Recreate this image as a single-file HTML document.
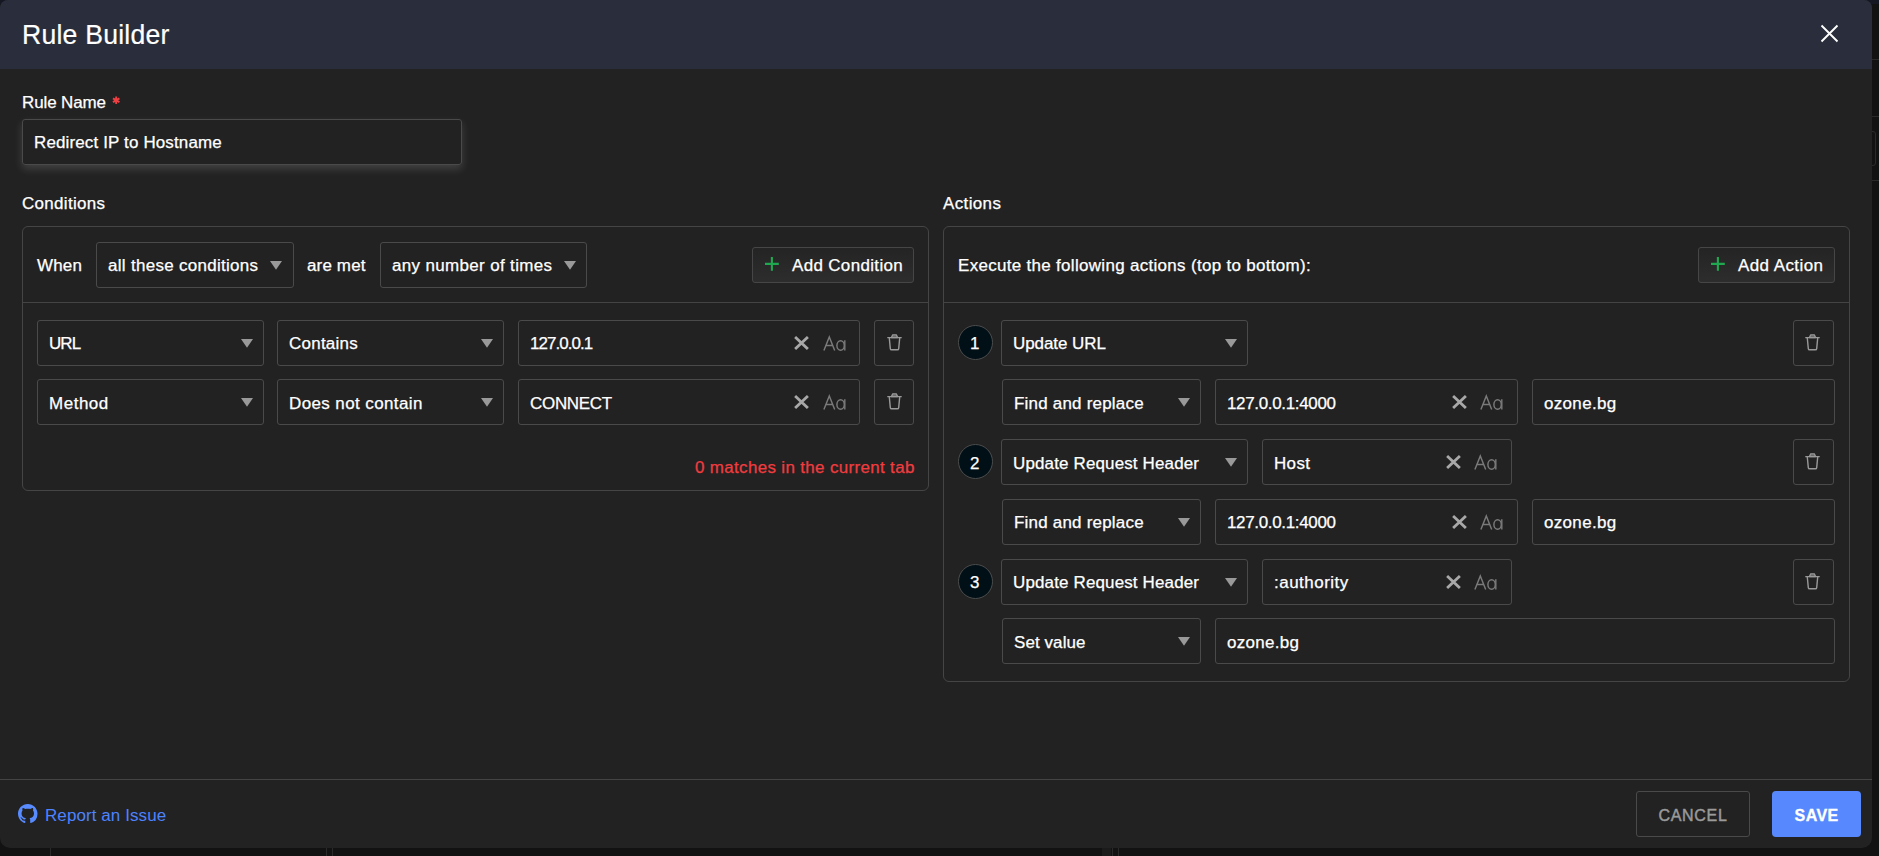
<!DOCTYPE html>
<html lang="en"><head><meta charset="utf-8"><title>Rule Builder</title><style>
html,body{margin:0;padding:0}
body{width:1879px;height:856px;overflow:hidden;background:#121212;position:relative;font-family:"Liberation Sans",sans-serif}
.ab,.bx,.pn,.btn,.hl,.ci,.t{position:absolute;box-sizing:border-box}
.modal{position:absolute;left:0;top:0;width:1872px;height:848px;background:#222222;border-radius:8px 8px 10px 10px;overflow:hidden}
.hdr{position:absolute;left:0;top:0;width:1872px;height:69px;background:#2a2e3c}
.bx{border:1px solid #4a4a4a}
.pn{border:1px solid #454545}
.btn{border:1px solid #464646;background:linear-gradient(#242424,#2d2d2d)}
.hl{height:1px;background:#444}
.ci{width:35px;height:35px;border-radius:50%;background:#010f16;border:1px solid #4c4c4c}
.t{white-space:pre;transform-origin:0 0}
.bk{position:absolute;background:#2a2a2a}
.g{position:absolute;left:0;top:0;width:0;height:0;margin:0;padding:0}
</style></head>
<body>

<div class="ab" style="left:0;top:0;width:1879px;height:4px;background:#151823"></div>
<div class="bk" style="left:1872px;top:59px;width:7px;height:1px"></div>
<div class="bk" style="left:1872px;top:116px;width:7px;height:1px"></div>
<div class="bk" style="left:1872px;top:180px;width:7px;height:1px"></div>
<div class="ab" style="left:1860px;top:131px;width:16px;height:35px;border:1px solid #2a2a2a;border-radius:3px"></div>
<div class="bk" style="left:50px;top:848px;width:1px;height:8px"></div>
<div class="bk" style="left:326px;top:848px;width:1px;height:8px"></div>
<div class="bk" style="left:332px;top:848px;width:1px;height:8px"></div>
<div class="ab" style="left:1102px;top:848px;width:9px;height:8px;background:#1b1b1b"></div>
<div class="bk" style="left:1112px;top:848px;width:1px;height:8px"></div>
<div class="bk" style="left:1118px;top:848px;width:1px;height:8px"></div>

<div class="modal" role="dialog" aria-label="Rule Builder">
<header class="g" aria-label="Rule Builder dialog title">
<div class="hdr"></div>
<svg class="ab" style="left:1820px;top:24px" width="19" height="19" viewBox="0 0 19 19"><path d="M1.5 1.5L17.5 17.5M17.5 1.5L1.5 17.5" stroke="#fff" stroke-width="1.9" fill="none"/></svg>
<span class="t" style="left:22.42px;top:17px;font-size:28px;line-height:35px;letter-spacing:0.231px;color:#fff;font-weight:400;transform:scaleX(0.95);-webkit-text-stroke:0.2px #fff">Rule Builder</span>
</header>
<section class="g" aria-label="Rule name">
<svg class="ab" style="left:112.1px;top:95.5px" width="8.4" height="8.4" viewBox="-4.2 -4.2 8.4 8.4"><path d="M0 -3.75V3.75M-3.25 -1.88L3.25 1.88M-3.25 1.88L3.25 -1.88" stroke="#ee3f42" stroke-width="1.9" fill="none"/></svg>
<div class="bx" style="left:22px;top:119px;width:440px;height:46px;border-radius:3px;box-shadow:0 4px 8px rgba(255,255,255,0.15);"></div>
<span class="t" style="left:21.73px;top:93px;font-size:16px;line-height:20px;letter-spacing:-0.097px;color:#fff;font-weight:400;transform:scaleX(1.06);-webkit-text-stroke:0.25px #fff">Rule Name</span>
<span class="t" style="left:33.97px;top:133px;font-size:16px;line-height:20px;letter-spacing:0.14px;color:#fff;font-weight:400;transform:scaleX(1.06);-webkit-text-stroke:0.25px #fff">Redirect IP to Hostname</span>
</section>
<section class="g" aria-label="Conditions">
<div class="pn" style="left:22px;top:226px;width:907px;height:265px;border-radius:6px;"></div>
<div class="hl" style="left:23px;top:302px;width:905px"></div>
<div class="bx" style="left:96px;top:242px;width:198px;height:46px;border-radius:3px;"></div>
<svg class="ab" style="left:270.25px;top:261.25px" width="12" height="8.7" viewBox="0 0 12 8.7"><path d="M0 0H12L6.0 8.7Z" fill="#999"/></svg>
<div class="bx" style="left:380px;top:242px;width:207px;height:46px;border-radius:3px;"></div>
<svg class="ab" style="left:564.25px;top:261.25px" width="12" height="8.7" viewBox="0 0 12 8.7"><path d="M0 0H12L6.0 8.7Z" fill="#999"/></svg>
<div class="btn" style="left:752px;top:247px;width:162px;height:36px;border-radius:3px;"></div>
<svg class="ab" style="left:765.2px;top:257.4px" width="13.8" height="13.8" viewBox="0 0 13.8 13.8"><path d="M6.9 0V13.8M0 6.9H13.8" stroke="#20a850" stroke-width="2.1" fill="none"/></svg>
<div class="bx" style="left:37px;top:320px;width:227px;height:46px;border-radius:3px;"></div>
<svg class="ab" style="left:240.75px;top:339.25px" width="12" height="8.7" viewBox="0 0 12 8.7"><path d="M0 0H12L6.0 8.7Z" fill="#999"/></svg>
<div class="bx" style="left:277px;top:320px;width:227px;height:46px;border-radius:3px;"></div>
<svg class="ab" style="left:481px;top:339.25px" width="12" height="8.7" viewBox="0 0 12 8.7"><path d="M0 0H12L6.0 8.7Z" fill="#999"/></svg>
<div class="bx" style="left:518px;top:320px;width:342px;height:46px;border-radius:3px;"></div>
<svg class="ab" style="left:794.1px;top:336.1px" width="15" height="14" viewBox="0 0 15 14"><path d="M1.1 1L13.9 13M13.9 1L1.1 13" stroke="#a8a8a8" stroke-width="2.8" fill="none"/></svg>
<svg class="ab" style="left:822.5px;top:334.4px" width="24" height="18" viewBox="0 0 24 18"><path d="M0.9 16.4L6.3 2.9L11.7 16.4M2.9 11.4H9.7" stroke="#7a7a7a" stroke-width="1.45" fill="none" stroke-linejoin="miter"/><ellipse cx="17.6" cy="11.5" rx="3.7" ry="4.7" stroke="#7a7a7a" stroke-width="1.45" fill="none"/><path d="M21.8 6.2V16.6" stroke="#7a7a7a" stroke-width="1.45"/></svg>
<div class="bx" style="left:874px;top:320px;width:40px;height:46px;border-radius:3px;"></div>
<svg class="ab" style="left:886.6px;top:333.7px" width="15" height="17" viewBox="0 0 15 17"><path d="M4.4 3.5L5.7 0.8H9.3L10.6 3.5Z" fill="#5c5c5c" stroke="#999" stroke-width="1.3" stroke-linejoin="round"/><path d="M0.3 3.6H14.7M2.3 4L3.3 14.6Q3.4 15.8 4.6 15.8H10.4Q11.6 15.8 11.7 14.6L12.7 4" stroke="#999" stroke-width="1.4" fill="none" stroke-linejoin="round"/></svg>
<div class="bx" style="left:37px;top:379px;width:227px;height:46px;border-radius:3px;"></div>
<svg class="ab" style="left:240.75px;top:398.25px" width="12" height="8.7" viewBox="0 0 12 8.7"><path d="M0 0H12L6.0 8.7Z" fill="#999"/></svg>
<div class="bx" style="left:277px;top:379px;width:227px;height:46px;border-radius:3px;"></div>
<svg class="ab" style="left:481px;top:398.25px" width="12" height="8.7" viewBox="0 0 12 8.7"><path d="M0 0H12L6.0 8.7Z" fill="#999"/></svg>
<div class="bx" style="left:518px;top:379px;width:342px;height:46px;border-radius:3px;"></div>
<svg class="ab" style="left:794.1px;top:395.1px" width="15" height="14" viewBox="0 0 15 14"><path d="M1.1 1L13.9 13M13.9 1L1.1 13" stroke="#a8a8a8" stroke-width="2.8" fill="none"/></svg>
<svg class="ab" style="left:822.5px;top:393.4px" width="24" height="18" viewBox="0 0 24 18"><path d="M0.9 16.4L6.3 2.9L11.7 16.4M2.9 11.4H9.7" stroke="#7a7a7a" stroke-width="1.45" fill="none" stroke-linejoin="miter"/><ellipse cx="17.6" cy="11.5" rx="3.7" ry="4.7" stroke="#7a7a7a" stroke-width="1.45" fill="none"/><path d="M21.8 6.2V16.6" stroke="#7a7a7a" stroke-width="1.45"/></svg>
<div class="bx" style="left:874px;top:379px;width:40px;height:46px;border-radius:3px;"></div>
<svg class="ab" style="left:886.6px;top:392.7px" width="15" height="17" viewBox="0 0 15 17"><path d="M4.4 3.5L5.7 0.8H9.3L10.6 3.5Z" fill="#5c5c5c" stroke="#999" stroke-width="1.3" stroke-linejoin="round"/><path d="M0.3 3.6H14.7M2.3 4L3.3 14.6Q3.4 15.8 4.6 15.8H10.4Q11.6 15.8 11.7 14.6L12.7 4" stroke="#999" stroke-width="1.4" fill="none" stroke-linejoin="round"/></svg>
<span class="t" style="left:21.95px;top:194px;font-size:16px;line-height:20px;letter-spacing:0.308px;color:#fff;font-weight:400;transform:scaleX(1.06);-webkit-text-stroke:0.25px #fff">Conditions</span>
<span class="t" style="left:37.2px;top:256px;font-size:16px;line-height:20px;letter-spacing:0.204px;color:#fff;font-weight:400;transform:scaleX(1.06);-webkit-text-stroke:0.25px #fff">When</span>
<span class="t" style="left:108.47px;top:256px;font-size:16px;line-height:20px;letter-spacing:0.288px;color:#fff;font-weight:400;transform:scaleX(1.06);-webkit-text-stroke:0.25px #fff">all these conditions</span>
<span class="t" style="left:307.47px;top:256px;font-size:16px;line-height:20px;letter-spacing:0.153px;color:#fff;font-weight:400;transform:scaleX(1.06);-webkit-text-stroke:0.25px #fff">are met</span>
<span class="t" style="left:392.47px;top:256px;font-size:16px;line-height:20px;letter-spacing:0.336px;color:#fff;font-weight:400;transform:scaleX(1.06);-webkit-text-stroke:0.25px #fff">any number of times</span>
<span class="t" style="left:791.5px;top:256px;font-size:16px;line-height:20px;letter-spacing:0.327px;color:#fff;font-weight:400;transform:scaleX(1.06);-webkit-text-stroke:0.25px #fff">Add Condition</span>
<span class="t" style="left:49.34px;top:334px;font-size:16px;line-height:20px;letter-spacing:-0.871px;color:#fff;font-weight:400;transform:scaleX(1.06);-webkit-text-stroke:0.25px #fff">URL</span>
<span class="t" style="left:289.31px;top:334px;font-size:16px;line-height:20px;letter-spacing:0.241px;color:#fff;font-weight:400;transform:scaleX(1.06);-webkit-text-stroke:0.25px #fff">Contains</span>
<span class="t" style="left:530.14px;top:334px;font-size:16px;line-height:20px;letter-spacing:-0.894px;color:#fff;font-weight:400;transform:scaleX(1.06);-webkit-text-stroke:0.25px #fff">127.0.0.1</span>
<span class="t" style="left:49.07px;top:394px;font-size:16px;line-height:20px;letter-spacing:0.511px;color:#fff;font-weight:400;transform:scaleX(1.06);-webkit-text-stroke:0.25px #fff">Method</span>
<span class="t" style="left:288.78px;top:394px;font-size:16px;line-height:20px;letter-spacing:0.386px;color:#fff;font-weight:400;transform:scaleX(1.06);-webkit-text-stroke:0.25px #fff">Does not contain</span>
<span class="t" style="left:530.41px;top:394px;font-size:16px;line-height:20px;letter-spacing:-0.263px;color:#fff;font-weight:400;transform:scaleX(1.06);-webkit-text-stroke:0.25px #fff">CONNECT</span>
<span class="t" style="left:695.47px;top:458px;font-size:16px;line-height:20px;letter-spacing:0.318px;color:#f13c40;font-weight:400;transform:scaleX(1.06);-webkit-text-stroke:0.25px #f13c40">0 matches in the current tab</span>
</section>
<section class="g" aria-label="Actions">
<div class="pn" style="left:943px;top:226px;width:907px;height:456px;border-radius:6px;"></div>
<div class="hl" style="left:944px;top:302px;width:905px"></div>
<div class="btn" style="left:1698px;top:247px;width:137px;height:36px;border-radius:3px;"></div>
<svg class="ab" style="left:1711.45px;top:257.4px" width="13.8" height="13.8" viewBox="0 0 13.8 13.8"><path d="M6.9 0V13.8M0 6.9H13.8" stroke="#20a850" stroke-width="2.1" fill="none"/></svg>
<div class="ci" style="left:958px;top:325px"></div>
<div class="bx" style="left:1001px;top:320px;width:247px;height:46px;border-radius:3px;"></div>
<svg class="ab" style="left:1225px;top:339.25px" width="12" height="8.7" viewBox="0 0 12 8.7"><path d="M0 0H12L6.0 8.7Z" fill="#999"/></svg>
<div class="bx" style="left:1793px;top:320px;width:41px;height:46px;border-radius:3px;"></div>
<svg class="ab" style="left:1805.3px;top:333.7px" width="15" height="17" viewBox="0 0 15 17"><path d="M4.4 3.5L5.7 0.8H9.3L10.6 3.5Z" fill="#5c5c5c" stroke="#999" stroke-width="1.3" stroke-linejoin="round"/><path d="M0.3 3.6H14.7M2.3 4L3.3 14.6Q3.4 15.8 4.6 15.8H10.4Q11.6 15.8 11.7 14.6L12.7 4" stroke="#999" stroke-width="1.4" fill="none" stroke-linejoin="round"/></svg>
<div class="bx" style="left:1002px;top:379px;width:199px;height:46px;border-radius:3px;"></div>
<svg class="ab" style="left:1178px;top:398.25px" width="12" height="8.7" viewBox="0 0 12 8.7"><path d="M0 0H12L6.0 8.7Z" fill="#999"/></svg>
<div class="bx" style="left:1215px;top:379px;width:303px;height:46px;border-radius:3px;"></div>
<svg class="ab" style="left:1452.1px;top:395.1px" width="15" height="14" viewBox="0 0 15 14"><path d="M1.1 1L13.9 13M13.9 1L1.1 13" stroke="#a8a8a8" stroke-width="2.8" fill="none"/></svg>
<svg class="ab" style="left:1480.0px;top:393.4px" width="24" height="18" viewBox="0 0 24 18"><path d="M0.9 16.4L6.3 2.9L11.7 16.4M2.9 11.4H9.7" stroke="#7a7a7a" stroke-width="1.45" fill="none" stroke-linejoin="miter"/><ellipse cx="17.6" cy="11.5" rx="3.7" ry="4.7" stroke="#7a7a7a" stroke-width="1.45" fill="none"/><path d="M21.8 6.2V16.6" stroke="#7a7a7a" stroke-width="1.45"/></svg>
<div class="bx" style="left:1532px;top:379px;width:303px;height:46px;border-radius:3px;"></div>
<div class="ci" style="left:958px;top:444px"></div>
<div class="bx" style="left:1001px;top:439px;width:247px;height:46px;border-radius:3px;"></div>
<svg class="ab" style="left:1225px;top:458.25px" width="12" height="8.7" viewBox="0 0 12 8.7"><path d="M0 0H12L6.0 8.7Z" fill="#999"/></svg>
<div class="bx" style="left:1262px;top:439px;width:250px;height:46px;border-radius:3px;"></div>
<svg class="ab" style="left:1446.1px;top:455.1px" width="15" height="14" viewBox="0 0 15 14"><path d="M1.1 1L13.9 13M13.9 1L1.1 13" stroke="#a8a8a8" stroke-width="2.8" fill="none"/></svg>
<svg class="ab" style="left:1474.0px;top:453.4px" width="24" height="18" viewBox="0 0 24 18"><path d="M0.9 16.4L6.3 2.9L11.7 16.4M2.9 11.4H9.7" stroke="#7a7a7a" stroke-width="1.45" fill="none" stroke-linejoin="miter"/><ellipse cx="17.6" cy="11.5" rx="3.7" ry="4.7" stroke="#7a7a7a" stroke-width="1.45" fill="none"/><path d="M21.8 6.2V16.6" stroke="#7a7a7a" stroke-width="1.45"/></svg>
<div class="bx" style="left:1793px;top:439px;width:41px;height:46px;border-radius:3px;"></div>
<svg class="ab" style="left:1805.3px;top:452.7px" width="15" height="17" viewBox="0 0 15 17"><path d="M4.4 3.5L5.7 0.8H9.3L10.6 3.5Z" fill="#5c5c5c" stroke="#999" stroke-width="1.3" stroke-linejoin="round"/><path d="M0.3 3.6H14.7M2.3 4L3.3 14.6Q3.4 15.8 4.6 15.8H10.4Q11.6 15.8 11.7 14.6L12.7 4" stroke="#999" stroke-width="1.4" fill="none" stroke-linejoin="round"/></svg>
<div class="bx" style="left:1002px;top:499px;width:199px;height:46px;border-radius:3px;"></div>
<svg class="ab" style="left:1178px;top:518.25px" width="12" height="8.7" viewBox="0 0 12 8.7"><path d="M0 0H12L6.0 8.7Z" fill="#999"/></svg>
<div class="bx" style="left:1215px;top:499px;width:303px;height:46px;border-radius:3px;"></div>
<svg class="ab" style="left:1452.1px;top:515.1px" width="15" height="14" viewBox="0 0 15 14"><path d="M1.1 1L13.9 13M13.9 1L1.1 13" stroke="#a8a8a8" stroke-width="2.8" fill="none"/></svg>
<svg class="ab" style="left:1480.0px;top:513.4px" width="24" height="18" viewBox="0 0 24 18"><path d="M0.9 16.4L6.3 2.9L11.7 16.4M2.9 11.4H9.7" stroke="#7a7a7a" stroke-width="1.45" fill="none" stroke-linejoin="miter"/><ellipse cx="17.6" cy="11.5" rx="3.7" ry="4.7" stroke="#7a7a7a" stroke-width="1.45" fill="none"/><path d="M21.8 6.2V16.6" stroke="#7a7a7a" stroke-width="1.45"/></svg>
<div class="bx" style="left:1532px;top:499px;width:303px;height:46px;border-radius:3px;"></div>
<div class="ci" style="left:958px;top:564px"></div>
<div class="bx" style="left:1001px;top:559px;width:247px;height:46px;border-radius:3px;"></div>
<svg class="ab" style="left:1225px;top:578.25px" width="12" height="8.7" viewBox="0 0 12 8.7"><path d="M0 0H12L6.0 8.7Z" fill="#999"/></svg>
<div class="bx" style="left:1262px;top:559px;width:250px;height:46px;border-radius:3px;"></div>
<svg class="ab" style="left:1446.1px;top:575.1px" width="15" height="14" viewBox="0 0 15 14"><path d="M1.1 1L13.9 13M13.9 1L1.1 13" stroke="#a8a8a8" stroke-width="2.8" fill="none"/></svg>
<svg class="ab" style="left:1474.0px;top:573.4px" width="24" height="18" viewBox="0 0 24 18"><path d="M0.9 16.4L6.3 2.9L11.7 16.4M2.9 11.4H9.7" stroke="#7a7a7a" stroke-width="1.45" fill="none" stroke-linejoin="miter"/><ellipse cx="17.6" cy="11.5" rx="3.7" ry="4.7" stroke="#7a7a7a" stroke-width="1.45" fill="none"/><path d="M21.8 6.2V16.6" stroke="#7a7a7a" stroke-width="1.45"/></svg>
<div class="bx" style="left:1793px;top:559px;width:41px;height:46px;border-radius:3px;"></div>
<svg class="ab" style="left:1805.3px;top:572.7px" width="15" height="17" viewBox="0 0 15 17"><path d="M4.4 3.5L5.7 0.8H9.3L10.6 3.5Z" fill="#5c5c5c" stroke="#999" stroke-width="1.3" stroke-linejoin="round"/><path d="M0.3 3.6H14.7M2.3 4L3.3 14.6Q3.4 15.8 4.6 15.8H10.4Q11.6 15.8 11.7 14.6L12.7 4" stroke="#999" stroke-width="1.4" fill="none" stroke-linejoin="round"/></svg>
<div class="bx" style="left:1002px;top:618px;width:199px;height:46px;border-radius:3px;"></div>
<svg class="ab" style="left:1178px;top:637.25px" width="12" height="8.7" viewBox="0 0 12 8.7"><path d="M0 0H12L6.0 8.7Z" fill="#999"/></svg>
<div class="bx" style="left:1215px;top:618px;width:620px;height:46px;border-radius:3px;"></div>
<span class="t" style="left:943.45px;top:194px;font-size:16px;line-height:20px;letter-spacing:0.356px;color:#fff;font-weight:400;transform:scaleX(1.06);-webkit-text-stroke:0.25px #fff">Actions</span>
<span class="t" style="left:957.97px;top:256px;font-size:16px;line-height:20px;letter-spacing:0.299px;color:#fff;font-weight:400;transform:scaleX(1.06);-webkit-text-stroke:0.25px #fff">Execute the following actions (top to bottom):</span>
<span class="t" style="left:1737.5px;top:256px;font-size:16px;line-height:20px;letter-spacing:0.412px;color:#fff;font-weight:400;transform:scaleX(1.06);-webkit-text-stroke:0.25px #fff">Add Action</span>
<span class="t" style="left:970.44px;top:334px;font-size:16px;line-height:20px;letter-spacing:0px;color:#fff;font-weight:400;transform:scaleX(1.06);-webkit-text-stroke:0.25px #fff">1</span>
<span class="t" style="left:1013.34px;top:334px;font-size:16px;line-height:20px;letter-spacing:-0.052px;color:#fff;font-weight:400;transform:scaleX(1.06);-webkit-text-stroke:0.25px #fff">Update URL</span>
<span class="t" style="left:1014.07px;top:394px;font-size:16px;line-height:20px;letter-spacing:0.206px;color:#fff;font-weight:400;transform:scaleX(1.06);-webkit-text-stroke:0.25px #fff">Find and replace</span>
<span class="t" style="left:1226.94px;top:394px;font-size:16px;line-height:20px;letter-spacing:-0.304px;color:#fff;font-weight:400;transform:scaleX(1.06);-webkit-text-stroke:0.25px #fff">127.0.0.1:4000</span>
<span class="t" style="left:1544.47px;top:394px;font-size:16px;line-height:20px;letter-spacing:0.323px;color:#fff;font-weight:400;transform:scaleX(1.06);-webkit-text-stroke:0.25px #fff">ozone.bg</span>
<span class="t" style="left:969.71px;top:454px;font-size:16px;line-height:20px;letter-spacing:0px;color:#fff;font-weight:400;transform:scaleX(1.06);-webkit-text-stroke:0.25px #fff">2</span>
<span class="t" style="left:1013.34px;top:454px;font-size:16px;line-height:20px;letter-spacing:0.146px;color:#fff;font-weight:400;transform:scaleX(1.06);-webkit-text-stroke:0.25px #fff">Update Request Header</span>
<span class="t" style="left:1273.97px;top:454px;font-size:16px;line-height:20px;letter-spacing:0.344px;color:#fff;font-weight:400;transform:scaleX(1.06);-webkit-text-stroke:0.25px #fff">Host</span>
<span class="t" style="left:1014.07px;top:513px;font-size:16px;line-height:20px;letter-spacing:0.206px;color:#fff;font-weight:400;transform:scaleX(1.06);-webkit-text-stroke:0.25px #fff">Find and replace</span>
<span class="t" style="left:1226.94px;top:513px;font-size:16px;line-height:20px;letter-spacing:-0.304px;color:#fff;font-weight:400;transform:scaleX(1.06);-webkit-text-stroke:0.25px #fff">127.0.0.1:4000</span>
<span class="t" style="left:1544.47px;top:513px;font-size:16px;line-height:20px;letter-spacing:0.323px;color:#fff;font-weight:400;transform:scaleX(1.06);-webkit-text-stroke:0.25px #fff">ozone.bg</span>
<span class="t" style="left:969.97px;top:573px;font-size:16px;line-height:20px;letter-spacing:0px;color:#fff;font-weight:400;transform:scaleX(1.06);-webkit-text-stroke:0.25px #fff">3</span>
<span class="t" style="left:1013.34px;top:573px;font-size:16px;line-height:20px;letter-spacing:0.146px;color:#fff;font-weight:400;transform:scaleX(1.06);-webkit-text-stroke:0.25px #fff">Update Request Header</span>
<span class="t" style="left:1273.67px;top:573px;font-size:16px;line-height:20px;letter-spacing:0.478px;color:#fff;font-weight:400;transform:scaleX(1.06);-webkit-text-stroke:0.25px #fff">:authority</span>
<span class="t" style="left:1014.47px;top:633px;font-size:16px;line-height:20px;letter-spacing:0.089px;color:#fff;font-weight:400;transform:scaleX(1.06);-webkit-text-stroke:0.25px #fff">Set value</span>
<span class="t" style="left:1227.47px;top:633px;font-size:16px;line-height:20px;letter-spacing:0.296px;color:#fff;font-weight:400;transform:scaleX(1.06);-webkit-text-stroke:0.25px #fff">ozone.bg</span>
</section>
<footer class="g" aria-label="Dialog actions">
<div class="hl" style="left:0;top:779px;width:1872px"></div>
<svg class="ab" style="left:18.1px;top:804px" width="19.5" height="19.5" viewBox="0 0 16 16"><path fill="#588bff" d="M8 0C3.58 0 0 3.58 0 8c0 3.54 2.29 6.53 5.47 7.59.4.07.55-.17.55-.38 0-.19-.01-.82-.01-1.49-2.01.37-2.53-.49-2.69-.94-.09-.23-.48-.94-.82-1.13-.28-.15-.68-.52-.01-.53.63-.01 1.08.58 1.23.82.72 1.21 1.87.87 2.33.66.07-.52.28-.87.51-1.07-1.78-.2-3.64-.89-3.64-3.95 0-.87.31-1.59.82-2.15-.08-.2-.36-1.02.08-2.12 0 0 .67-.21 2.2.82.64-.18 1.32-.27 2-.27.68 0 1.36.09 2 .27 1.53-1.04 2.2-.82 2.2-.82.44 1.1.16 1.92.08 2.12.51.56.82 1.27.82 2.15 0 3.07-1.87 3.75-3.65 3.95.29.25.54.73.54 1.48 0 1.07-.01 1.93-.01 2.2 0 .21.15.46.55.38A8.013 8.013 0 0016 8c0-4.42-3.58-8-8-8z"/></svg>
<div class="bx" style="left:1636px;top:791px;width:114px;height:46px;border-radius:3px;"></div>
<div class="ab" style="left:1772px;top:791px;width:89.25px;height:46px;border-radius:4px;background:#5788fd"></div>
<span class="t" style="left:44.77px;top:806px;font-size:16px;line-height:20px;letter-spacing:0.096px;color:#4d83ff;font-weight:400;transform:scaleX(1.06)">Report an Issue</span>
<span class="t" style="left:1658.55px;top:806px;font-size:16px;line-height:20px;letter-spacing:0.668px;color:#9a9a9a;font-weight:400;-webkit-text-stroke:0.45px #9a9a9a">CANCEL</span>
<span class="t" style="left:1794.55px;top:806px;font-size:16px;line-height:20px;letter-spacing:0.43px;color:#fff;font-weight:700;-webkit-text-stroke:0.3px #fff">SAVE</span>
</footer>
</div>
</body></html>
